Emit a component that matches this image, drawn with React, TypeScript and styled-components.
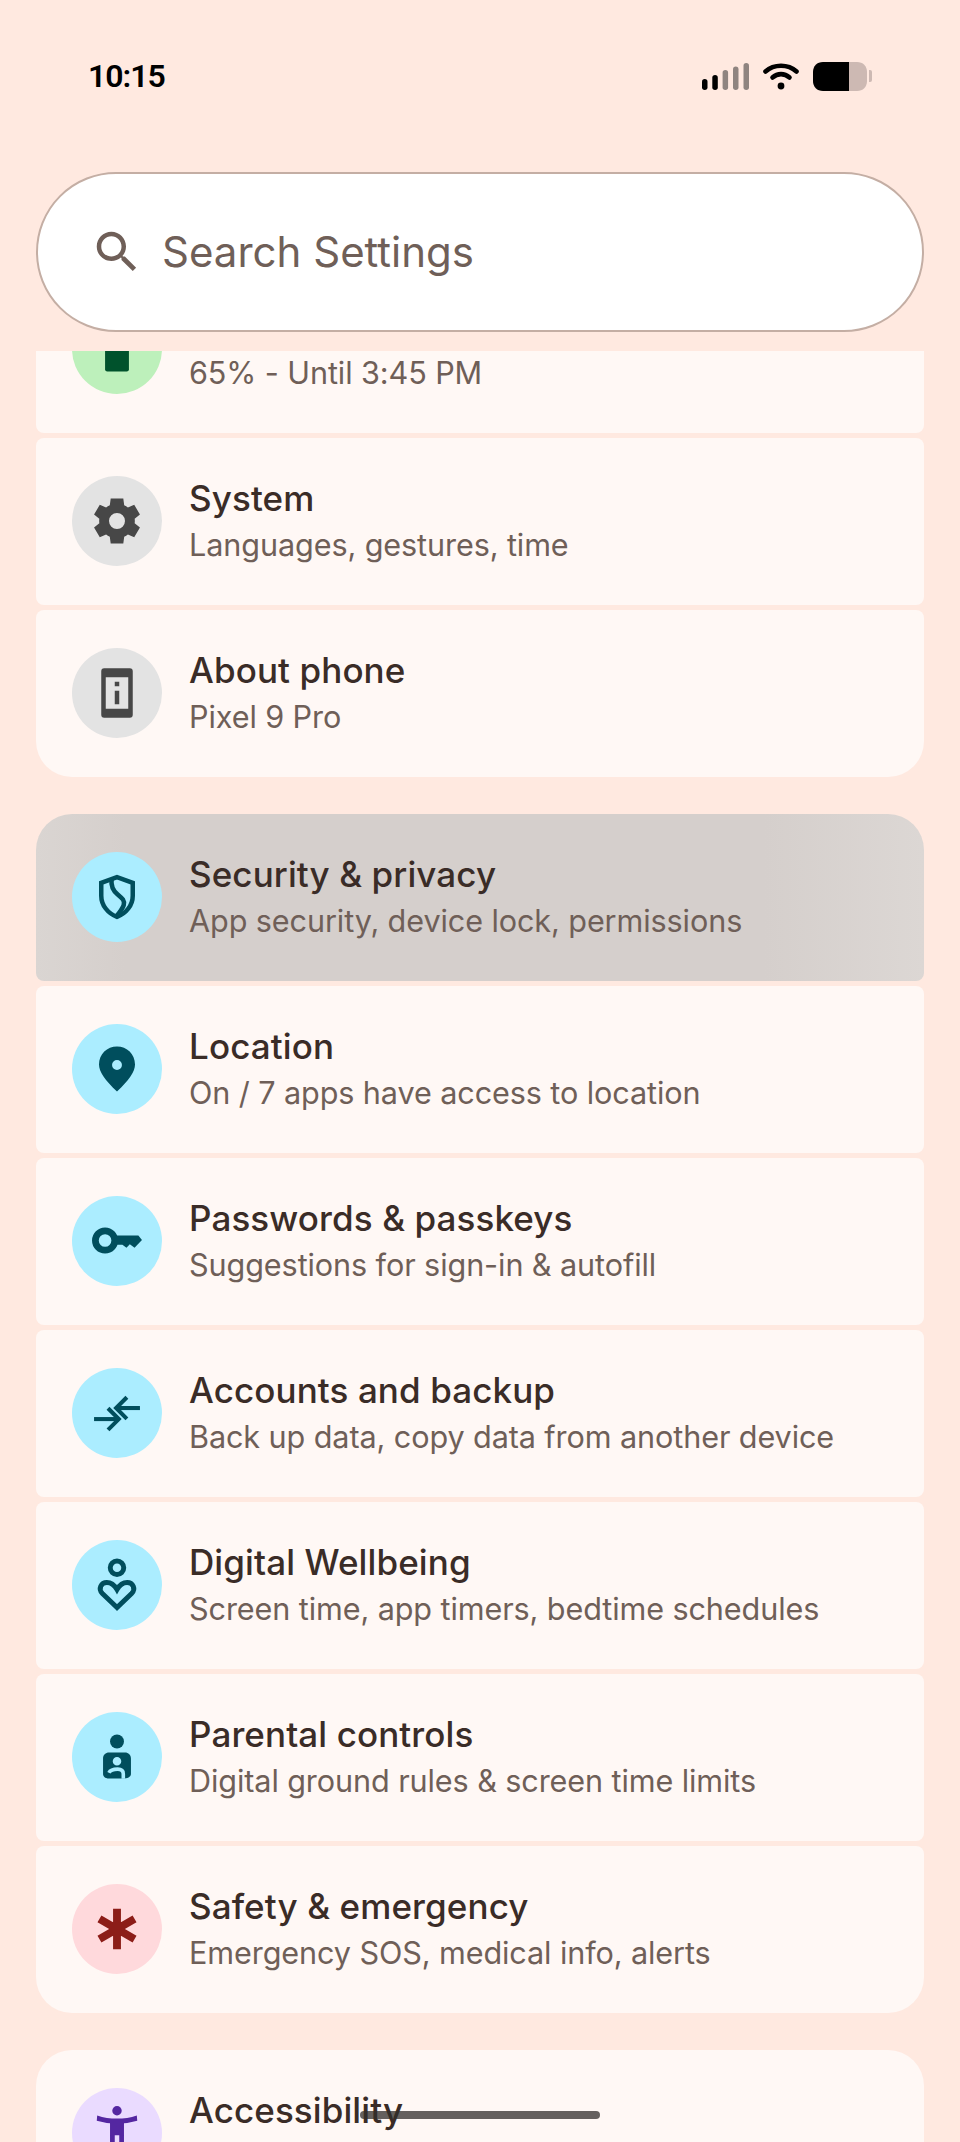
import React, { FC, ReactNode } from 'react';
import styled, { createGlobalStyle } from 'styled-components';

const GlobalStyle = createGlobalStyle`
    html, body {
        margin: 0;
        padding: 0;
        background: #ffe9e0;
    }
    * {
        box-sizing: border-box;
    }
`;

type Tone = 'green' | 'grey' | 'blue' | 'red' | 'purple';

const TONES: Record<Tone, { bg: string; fg: string }> = {
    green: { bg: '#bdf0bb', fg: '#00522c' },
    grey: { bg: '#e3e3e3', fg: '#474747' },
    blue: { bg: '#abedff', fg: '#004e5d' },
    red: { bg: '#ffd9dc', fg: '#8c1d18' },
    purple: { bg: '#eadbff', fg: '#5427a1' },
};

const Screen = styled.div`
    position: relative;
    display: flex;
    flex-direction: column;
    width: 960px;
    height: 2142px;
    overflow: hidden;
    background: #ffe9e0;
    font-family: Inter, "Noto Sans", sans-serif;
`;

const StatusBar = styled.div`
    display: flex;
    align-items: center;
    justify-content: space-between;
    height: 172px;
    padding: 0 88px 20px 88px;
    flex-shrink: 0;
`;

const Clock = styled.span`
    font-family: Roboto, sans-serif;
    font-size: 32px;
    font-weight: 600;
    letter-spacing: -1px;
    color: #000;
`;

const StatusIcons = styled.div`
    display: flex;
    align-items: center;
    gap: 14px;
`;

const SearchBar = styled.div`
    display: flex;
    align-items: center;
    flex-shrink: 0;
    height: 160px;
    margin: 0 36px;
    padding-left: 52px;
    gap: 18px;
    background: #fff;
    border: 2px solid #c4aea4;
    border-radius: 80px;
`;

const SearchLabel = styled.span`
    font-size: 42px;
    color: #6f5f58;
    margin-top: -2px;
`;

const Viewport = styled.div`
    flex: 1;
    margin-top: 19px;
    overflow: hidden;
`;

const ScrollContent = styled.div`
    display: flex;
    flex-direction: column;
    margin-top: -85px;
    padding: 0 36px;
`;

const Group = styled.div`
    display: flex;
    flex-direction: column;
    gap: 5px;
    margin-bottom: 37px;
`;

const Row = styled.div<{ $first?: boolean; $last?: boolean; $pressed?: boolean }>`
    display: flex;
    align-items: center;
    flex-shrink: 0;
    height: 167px;
    padding: 0 0 2px 36px;
    gap: 27px;
    background: ${(p) => p.$pressed
        ? 'linear-gradient(90deg, #dad5d2 0%, #d5cfcc 10%, #d5cfcc 82%, #dcd7d4 100%)'
        : '#fff8f5'};
    border-radius: ${(p) => `${p.$first ? 36 : 8}px ${p.$first ? 36 : 8}px ${p.$last ? 36 : 8}px ${p.$last ? 36 : 8}px`};
`;

const IconCircle = styled.div<{ $tone: Tone }>`
    display: flex;
    align-items: center;
    justify-content: center;
    flex-shrink: 0;
    width: 90px;
    height: 90px;
    border-radius: 50%;
    background: ${(p) => TONES[p.$tone].bg};
    color: ${(p) => TONES[p.$tone].fg};
`;

const RowText = styled.div`
    display: flex;
    flex-direction: column;
    gap: 5px;
    padding-top: 1px;
`;

const RowTitle = styled.span`
    font-size: 35px;
    line-height: 43px;
    font-weight: 500;
    color: #3a2c27;
    letter-spacing: 0.1px;
`;

const RowSubtitle = styled.span`
    font-size: 30.6px;
    line-height: 40px;
    color: #6f5f58;
    letter-spacing: -0.1px;
`;

const HomeIndicator = styled.div`
    position: absolute;
    left: 360px;
    bottom: 23px;
    width: 240px;
    height: 8px;
    border-radius: 4px;
    background: rgba(50, 45, 43, 0.75);
`;

const Icon: FC<{ children: ReactNode }> = ({ children }) => (
    <svg width="54" height="54" viewBox="0 0 24 24" fill="currentColor">
        {children}
    </svg>
);

const SignalIcon = () => (
    <svg width="47" height="27" viewBox="0 0 47 27">
        <rect x="0" y="16" width="5.5" height="11" rx="2.75" fill="#000" />
        <rect x="10.3" y="12" width="5.5" height="15" rx="2.75" fill="#000" />
        <rect x="20.6" y="7" width="5.5" height="20" rx="2.75" fill="#8f8480" />
        <rect x="31" y="3.5" width="5.5" height="23.5" rx="2.75" fill="#8f8480" />
        <rect x="41.5" y="0" width="5.5" height="27" rx="2.75" fill="#8f8480" />
    </svg>
);

const WifiIcon = () => (
    <svg width="36" height="27" viewBox="0 0 36 27" fill="none" stroke="#000" strokeWidth="4.6" strokeLinecap="round">
        <path d="M2.5 8.5C11 .8 25 .8 33.500 8.500" />
        <path d="M9.500 14.500C14.500 10 21.500 10 26.500 14.500" />
        <circle cx="18" cy="23" r="3.400" fill="#000" stroke="none" />
    </svg>
);

const BatteryIcon = () => (
    <svg width="59" height="29" viewBox="0 0 59 29">
        <path d="M36 0h8c6 0 10 4 10 10v9c0 6-4 10-10 10h-8z" fill="#cdb9b3" />
        <path d="M10 0h26v29H10C4 29 0 25 0 19v-9C0 4 4 0 10 0z" fill="#000" />
        <path d="M56 8h1a2 2 0 0 1 2 2v8a2 2 0 0 1-2 2h-1z" fill="#cdb9b3" />
    </svg>
);

const SearchIcon = () => (
    <svg width="54" height="54" viewBox="0 0 24 24" fill="#6f5f58">
        <path d="M15.500 14h-.79l-.28-.27C15.410 12.590 16 11.110 16 9.500 16 5.910 13.090 3 9.500 3S3 5.910 3 9.500 5.910 16 9.500 16c1.610 0 3.090-.59 4.230-1.570l.27.28v.79l5 4.990L20.490 19l-4.990-5zm-6 0C7.010 14 5 11.990 5 9.500S7.010 5 9.500 5 14 7.010 14 9.500 11.990 14 9.500 14z" />
    </svg>
);

const BatteryGlyph = () => <Icon><rect x="6.700" y="2" width="10.600" height="20" rx="1" /></Icon>;

const GearGlyph = () => (
    <Icon>
        <path fillRule="evenodd" d="M9.200 2h5.600l.4 3c.6.250 1.150.6 1.650.95l2.800-1.150 2.550 4.300-2.350 1.900c.1.650.1 1.300 0 1.950l2.350 1.950-2.550 4.300-2.800-1.150c-.5.400-1.050.7-1.650.95l-.4 3H9.200l-.4-3c-.6-.250-1.150-.55-1.650-.95L4.350 19.200l-2.550-4.300 2.350-1.950c-.1-.65-.1-1.300 0-1.950L1.800 9.100l2.550-4.300 2.800 1.150c.5-.35 1.050-.7 1.650-.95zM12 8.450a3.550 3.550 0 1 0 0 7.100 3.550 3.550 0 0 0 0-7.100z" />
    </Icon>
);

const PhoneInfoGlyph = () => (
    <Icon>
        <path fillRule="evenodd" d="M6.300 1h11.400A1.300 1.300 0 0 1 19 2.300v19.400a1.300 1.300 0 0 1-1.300 1.300H6.300A1.300 1.300 0 0 1 5 21.700V2.300A1.300 1.300 0 0 1 6.300 1zM7 5v14h10V5zM11 7h2v2h-2zM11 11h2v6h-2z" />
    </Icon>
);

const ShieldGlyph = () => (
    <Icon>
        <g fill="none" stroke="currentColor" strokeWidth="2">
            <path d="M12 3.200 5 5.700v5.700c0 4.200 2.900 7.900 7 9.400 4.100-1.500 7-5.200 7-9.400V5.700z" />
            <path d="M9.600 4.200C9.200 7.400 10.400 9.300 12.300 10.900 14.200 12.500 15.500 13.400 15 15.500 14.600 17.200 13.300 18.400 11.800 20.500" />
        </g>
    </Icon>
);

const PinGlyph = () => (
    <Icon>
        <path fillRule="evenodd" d="M12 2c4.400 0 8 3.400 8 8 0 3.200-2.700 7-8 12-5.300-5-8-8.800-8-12 0-4.600 3.600-8 8-8zm0 6a2.200 2.200 0 1 0 0 4.400A2.200 2.200 0 0 0 12 8z" />
    </Icon>
);

const KeyGlyph = () => (
    <Icon>
        <path fillRule="evenodd" d="M6.700 6a5.800 5.800 0 1 1 0 11.600A5.800 5.800 0 0 1 6.700 6zm0 3a2.800 2.800 0 1 0 0 5.600 2.800 2.800 0 0 0 0-5.600z" />
        <path d="M11 9.500H21.500L23.100 11.600 19.800 15 17.700 13.400 16.200 15 14.400 13.700H11z" />
    </Icon>
);

const SyncArrowsGlyph = () => (
    <Icon>
        <g fill="none" stroke="currentColor" strokeWidth="1.800">
            <path d="M1.800 14.700H12.700" />
            <path d="M8 9.900l4.800 4.800-4.800 4.800" />
            <path d="M22.200 9.800H11.700" />
            <path d="M16.400 5l-4.800 4.800 4.800 4.800" />
        </g>
    </Icon>
);

const WellbeingGlyph = () => (
    <Icon>
        <g fill="none" stroke="currentColor" strokeWidth="2.200">
            <circle cx="12" cy="4.300" r="3" />
            <path d="M12 22L5.500 15.800C3.500 13.800 4.900 10.900 7.500 10.900 9.300 10.900 11 12.300 12 14 13 12.300 14.700 10.900 16.500 10.900 19.100 10.900 20.500 13.800 18.500 15.800z" />
        </g>
    </Icon>
);

const ParentalGlyph = () => (
    <Icon>
        <circle cx="12" cy="5.100" r="3.100" />
        <path fillRule="evenodd" d="M8.500 10h7c1.600 0 2.700 1.100 2.700 2.700v6.700c0 1.100-.8 1.900-2.900 2.100H8.500c-2 0-2.700-1-2.700-2.100v-6.700C5.800 11.100 6.900 10 8.500 10zm3.500 2a1.900 1.900 0 1 0 0 3.800 1.900 1.900 0 0 0 0-3.800z" />
        <path d="M8.400 19C9.200 17.400 10.800 17.400 12.300 17.400 14 17.400 14.800 18.300 14.800 19.500V21.700" fill="none" stroke="#abedff" strokeWidth="1.600" />
    </Icon>
);

const StarOfLifeGlyph = () => (
    <Icon>
        <path d="M10.250 3H13.750V8.970L18.925 5.980 20.675 9.020 15.500 12 20.675 14.980 18.925 18.020 13.750 15.030V21H10.250V15.030L5.075 18.020 3.325 14.980 8.500 12 3.325 9.020 5.075 5.980 10.250 8.970Z" />
    </Icon>
);

const AccessibilityGlyph = () => (
    <Icon>
        <circle cx="12" cy="2.100" r="2.100" />
        <path d="M3.200 4.200C6 5.200 9 5.600 12 5.600S18 5.200 20.800 4.200L21 6.500C19 7 17 7.500 15.100 7.700V24H13V13H11V24H8.900V7.700C7 7.500 5 7 3 6.500Z" />
    </Icon>
);

interface ItemProps {
    tone: Tone;
    icon: ReactNode;
    title: string;
    subtitle?: string;
    first?: boolean;
    last?: boolean;
    pressed?: boolean;
}

const SettingsItem: FC<ItemProps> = ({ tone, icon, title, subtitle, first, last, pressed }) => (
    <Row $first={first} $last={last} $pressed={pressed}>
        <IconCircle $tone={tone}>{icon}</IconCircle>
        <RowText>
            <RowTitle>{title}</RowTitle>
            {subtitle && <RowSubtitle>{subtitle}</RowSubtitle>}
        </RowText>
    </Row>
);

export default function App() {
    return (
        <Screen>
            <GlobalStyle />
            <StatusBar>
                <Clock>10:15</Clock>
                <StatusIcons>
                    <SignalIcon />
                    <WifiIcon />
                    <BatteryIcon />
                </StatusIcons>
            </StatusBar>
            <SearchBar>
                <SearchIcon />
                <SearchLabel>Search Settings</SearchLabel>
            </SearchBar>
            <Viewport>
                <ScrollContent>
                    <Group>
                        <SettingsItem tone="green" icon={<BatteryGlyph />} title="Battery" subtitle="65% - Until 3:45 PM" />
                        <SettingsItem tone="grey" icon={<GearGlyph />} title="System" subtitle="Languages, gestures, time" />
                        <SettingsItem tone="grey" icon={<PhoneInfoGlyph />} title="About phone" subtitle="Pixel 9 Pro" last />
                    </Group>
                    <Group>
                        <SettingsItem tone="blue" icon={<ShieldGlyph />} title="Security & privacy" subtitle="App security, device lock, permissions" first pressed />
                        <SettingsItem tone="blue" icon={<PinGlyph />} title="Location" subtitle="On / 7 apps have access to location" />
                        <SettingsItem tone="blue" icon={<KeyGlyph />} title="Passwords & passkeys" subtitle="Suggestions for sign-in & autofill" />
                        <SettingsItem tone="blue" icon={<SyncArrowsGlyph />} title="Accounts and backup" subtitle="Back up data, copy data from another device" />
                        <SettingsItem tone="blue" icon={<WellbeingGlyph />} title="Digital Wellbeing" subtitle="Screen time, app timers, bedtime schedules" />
                        <SettingsItem tone="blue" icon={<ParentalGlyph />} title="Parental controls" subtitle="Digital ground rules & screen time limits" />
                        <SettingsItem tone="red" icon={<StarOfLifeGlyph />} title="Safety & emergency" subtitle="Emergency SOS, medical info, alerts" last />
                    </Group>
                    <Group>
                        <SettingsItem tone="purple" icon={<AccessibilityGlyph />} title="Accessibility" subtitle="Display, talkback, audio" first last />
                    </Group>
                </ScrollContent>
            </Viewport>
            <HomeIndicator />
        </Screen>
    );
}
